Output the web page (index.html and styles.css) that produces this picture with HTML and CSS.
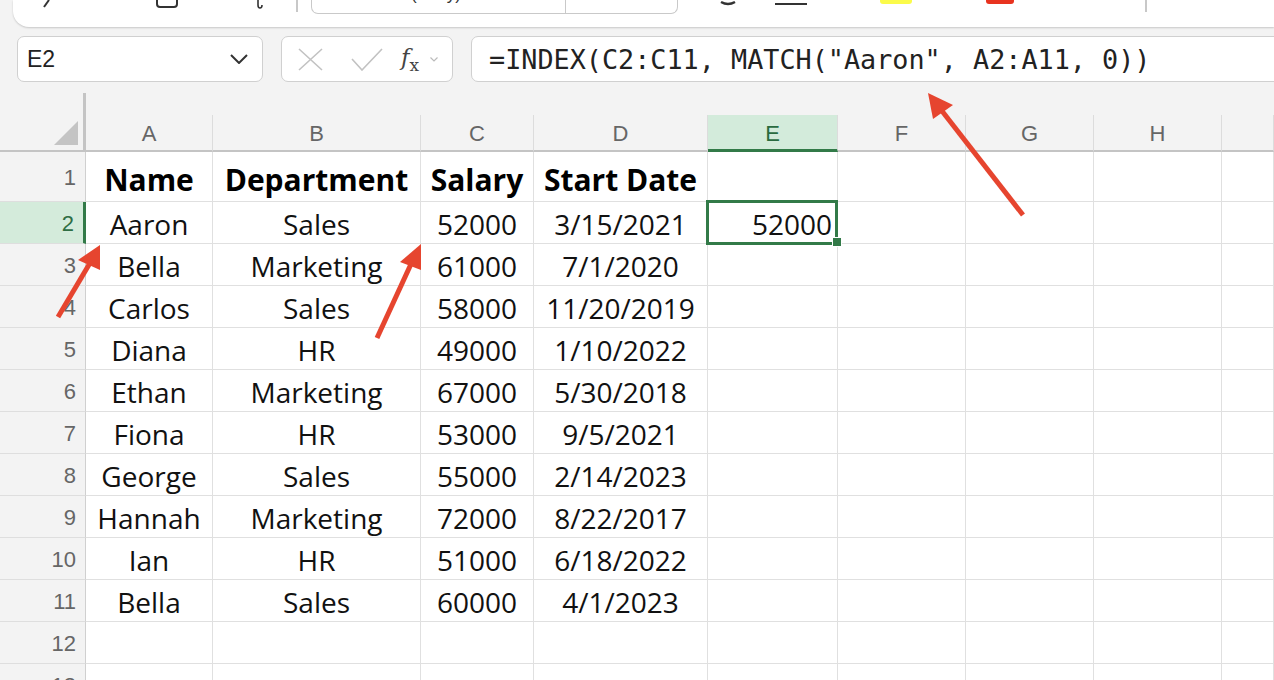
FILE: index.html
```html
<!DOCTYPE html>
<html lang="en">
<head>
    <meta charset="UTF-8">
    <meta name="viewport" content="width=device-width, initial-scale=1.0">
    <title>Employees - INDEX / MATCH</title>
    <link rel="stylesheet" href="styles.css">
</head>
<body>
    <div class="ribbon">
        <svg class="rb-undo" width="10" height="8" viewBox="0 0 10 8"><path d="M2 7 L7 0" stroke="#333" stroke-width="2" fill="none"/></svg>
        <svg class="rb-paste" width="22" height="8" viewBox="0 0 22 8"><path d="M1 0 V4 Q1 7 4 7 H18 Q21 7 21 4 V0" stroke="#333" stroke-width="2" fill="none"/></svg>
        <svg class="rb-brush" width="10" height="10" viewBox="0 0 10 10"><path d="M4 0 V5 Q4 8 6 8 Q8 8 8 5" stroke="#333" stroke-width="1.6" fill="none"/></svg>
        <span class="rb-sep"></span>
        <div class="font-box">
            <span class="font-name">Calibri (Body)</span>
            <span class="font-size"></span>
        </div>
        <svg class="rb-bold" width="18" height="8" viewBox="0 0 18 8"><path d="M2 2 Q9 6 16 2" stroke="#333" stroke-width="2.4" fill="none"/></svg>
        <span class="rb-underline"></span>
        <span class="rb-fill"></span>
        <span class="rb-color"></span>
        <span class="rb-sep rb-sep-right"></span>
    </div>

    <div class="formula-bar">
        <div class="name-box">
            <span>E2</span>
            <svg width="18" height="10" viewBox="0 0 18 10"><polyline points="1,1 9,9 17,1" fill="none" stroke="#333" stroke-width="2"/></svg>
        </div>
        <div class="fx-box">
            <svg width="25" height="23" viewBox="0 0 25 23"><path d="M1 1 L24 22 M24 1 L1 22" stroke="#c2c2c2" stroke-width="1.6" fill="none"/></svg>
            <svg width="32" height="23" viewBox="0 0 32 23"><polyline points="1,11 11,22 31,1" fill="none" stroke="#c2c2c2" stroke-width="1.6"/></svg>
            <span class="fx"><i>f</i><sub>x</sub></span>
            <svg width="8" height="5" viewBox="0 0 8 5"><polyline points="0.5,0.5 4,4 7.5,0.5" fill="none" stroke="#bbb" stroke-width="1.2"/></svg>
        </div>
        <div class="formula-input">=INDEX(C2:C11, MATCH("Aaron", A2:A11, 0))</div>
    </div>

    <div class="sheet">
        <div class="corner"><div class="corner-box"><span class="corner-tri"></span></div></div>
        <div class="col-head"><span>A</span></div>
        <div class="col-head"><span>B</span></div>
        <div class="col-head"><span>C</span></div>
        <div class="col-head"><span>D</span></div>
        <div class="col-head active"><span>E</span></div>
        <div class="col-head"><span>F</span></div>
        <div class="col-head"><span>G</span></div>
        <div class="col-head"><span>H</span></div>
        <div class="col-head"><span></span></div>

        <div class="row-head">1</div>
        <div class="cell bold">Name</div>
        <div class="cell bold">Department</div>
        <div class="cell bold">Salary</div>
        <div class="cell bold">Start Date</div>
        <div class="cell"></div><div class="cell"></div><div class="cell"></div><div class="cell"></div><div class="cell"></div>

        <div class="row-head active">2</div>
        <div class="cell">Aaron</div>
        <div class="cell">Sales</div>
        <div class="cell">52000</div>
        <div class="cell">3/15/2021</div>
        <div class="cell selected">52000</div>
        <div class="cell"></div><div class="cell"></div><div class="cell"></div><div class="cell"></div>

        <div class="row-head">3</div>
        <div class="cell">Bella</div>
        <div class="cell">Marketing</div>
        <div class="cell">61000</div>
        <div class="cell">7/1/2020</div>
        <div class="cell"></div><div class="cell"></div><div class="cell"></div><div class="cell"></div><div class="cell"></div>

        <div class="row-head">4</div>
        <div class="cell">Carlos</div>
        <div class="cell">Sales</div>
        <div class="cell">58000</div>
        <div class="cell">11/20/2019</div>
        <div class="cell"></div><div class="cell"></div><div class="cell"></div><div class="cell"></div><div class="cell"></div>

        <div class="row-head">5</div>
        <div class="cell">Diana</div>
        <div class="cell">HR</div>
        <div class="cell">49000</div>
        <div class="cell">1/10/2022</div>
        <div class="cell"></div><div class="cell"></div><div class="cell"></div><div class="cell"></div><div class="cell"></div>

        <div class="row-head">6</div>
        <div class="cell">Ethan</div>
        <div class="cell">Marketing</div>
        <div class="cell">67000</div>
        <div class="cell">5/30/2018</div>
        <div class="cell"></div><div class="cell"></div><div class="cell"></div><div class="cell"></div><div class="cell"></div>

        <div class="row-head">7</div>
        <div class="cell">Fiona</div>
        <div class="cell">HR</div>
        <div class="cell">53000</div>
        <div class="cell">9/5/2021</div>
        <div class="cell"></div><div class="cell"></div><div class="cell"></div><div class="cell"></div><div class="cell"></div>

        <div class="row-head">8</div>
        <div class="cell">George</div>
        <div class="cell">Sales</div>
        <div class="cell">55000</div>
        <div class="cell">2/14/2023</div>
        <div class="cell"></div><div class="cell"></div><div class="cell"></div><div class="cell"></div><div class="cell"></div>

        <div class="row-head">9</div>
        <div class="cell">Hannah</div>
        <div class="cell">Marketing</div>
        <div class="cell">72000</div>
        <div class="cell">8/22/2017</div>
        <div class="cell"></div><div class="cell"></div><div class="cell"></div><div class="cell"></div><div class="cell"></div>

        <div class="row-head">10</div>
        <div class="cell">Ian</div>
        <div class="cell">HR</div>
        <div class="cell">51000</div>
        <div class="cell">6/18/2022</div>
        <div class="cell"></div><div class="cell"></div><div class="cell"></div><div class="cell"></div><div class="cell"></div>

        <div class="row-head">11</div>
        <div class="cell">Bella</div>
        <div class="cell">Sales</div>
        <div class="cell">60000</div>
        <div class="cell">4/1/2023</div>
        <div class="cell"></div><div class="cell"></div><div class="cell"></div><div class="cell"></div><div class="cell"></div>

        <div class="row-head">12</div>
        <div class="cell"></div><div class="cell"></div><div class="cell"></div><div class="cell"></div>
        <div class="cell"></div><div class="cell"></div><div class="cell"></div><div class="cell"></div><div class="cell"></div>

        <div class="row-head">13</div>
        <div class="cell"></div><div class="cell"></div><div class="cell"></div><div class="cell"></div>
        <div class="cell"></div><div class="cell"></div><div class="cell"></div><div class="cell"></div><div class="cell"></div>
    </div>

    <!-- annotation arrows drawn over the sheet -->
    <svg class="arrows" width="1274" height="680" viewBox="0 0 1274 680">
        <g stroke="#e6452f" stroke-width="5" fill="none">
            <line x1="58" y1="317" x2="90" y2="263"/>
            <line x1="377" y1="338" x2="411" y2="264"/>
            <line x1="1023" y1="215" x2="942" y2="111"/>
        </g>
        <g fill="#e6452f">
            <polygon points="100,245 78,260 100,270"/>
            <polygon points="421,244 400,262 421,270"/>
            <polygon points="928,93 953,105 933,119"/>
        </g>
    </svg>
</body>
</html>
```

FILE: styles.css
```css
body {
    margin: 0;
    height: 680px;
    overflow: hidden;
    position: relative;
    background: #f3f3f3;
    font-family: "Liberation Sans", Arial, sans-serif;
}

/* ribbon strip, only its bottom edge is in view */
.ribbon {
    display: flex;
    align-items: flex-start;
    height: 27px;
    margin-left: 13px;
    background: #fff;
    border-bottom-left-radius: 16px;
    box-shadow: 0 1px 2px rgba(0, 0, 0, 0.18);
    overflow: hidden;
}
.rb-undo {
    margin-left: 29px;
}
.rb-paste {
    margin-left: 104px;
}
.rb-brush {
    margin-left: 76px;
}
.rb-sep {
    width: 2px;
    height: 12px;
    margin-left: 32px;
    background: #c8c8c8;
}
.font-box {
    display: flex;
    width: 367px;
    height: 14px;
    margin-left: 13px;
    border: 1px solid #c9c9c9;
    border-top: none;
    border-radius: 0 0 7px 7px;
    box-sizing: border-box;
}
.font-name {
    width: 254px;
    border-right: 1px solid #c9c9c9;
    font-size: 17px;
    line-height: 1;
    margin-top: -14px;
    padding-left: 46px;
    color: #333;
    box-sizing: border-box;
    overflow: hidden;
    white-space: nowrap;
}
.rb-bold {
    margin-left: 41px;
}
.rb-underline {
    width: 32px;
    height: 2px;
    margin-top: 3px;
    margin-left: 38px;
    background: #333;
}
.rb-fill {
    width: 32px;
    height: 4px;
    margin-left: 73px;
    background: #fbfb4a;
    border-radius: 0 0 3px 3px;
}
.rb-color {
    width: 28px;
    height: 4px;
    margin-left: 74px;
    background: #e8331f;
    border-radius: 0 0 3px 3px;
}
.rb-sep-right {
    margin-left: 131px;
}

/* name box + formula input */
.formula-bar {
    display: flex;
    gap: 18px;
    padding: 9px 0 0 17px;
    height: 46px;
}
.name-box,
.fx-box,
.formula-input {
    flex-shrink: 0;
    box-sizing: border-box;
    height: 46px;
    background: #fff;
    border: 1.5px solid #d0d0d0;
    border-radius: 7px;
    display: flex;
    align-items: center;
}
.name-box {
    width: 246px;
    justify-content: space-between;
    padding: 0 14px 0 9px;
    font-size: 23px;
    color: #222;
}
.fx-box {
    width: 172px;
    padding: 0 9px 0 16px;
}
.fx-box svg:nth-child(2) {
    margin-left: 28px;
}
.fx {
    margin-left: 18px;
    font-family: "DejaVu Serif", "Liberation Serif", serif;
    font-size: 23px;
    color: #444;
}
.fx sub {
    font-style: normal;
    font-size: 17px;
}
.fx-box svg:last-child {
    margin-left: 11px;
}
.formula-input {
    width: 840px;
    padding-left: 17px;
    font-family: "DejaVu Sans Mono", "Liberation Mono", monospace;
    font-size: 26.8px;
    color: #222;
}

/* grid */
.sheet {
    display: grid;
    grid-template-columns: 86px 127px 208px 113px 174px 130px 128px 128px 128px 1fr;
    grid-template-rows: 68px 50px repeat(12, 42px);
    margin-top: 2px;
}
.corner {
    display: flex;
    align-items: flex-end;
}
.corner-box {
    width: 100%;
    height: 59px;
    box-sizing: border-box;
    border-right: 3px solid #c4c4c4;
    border-bottom: 2px solid #c4c4c4;
    display: flex;
    justify-content: flex-end;
    align-items: flex-end;
    padding: 0 5px 5px 0;
}
.corner-tri {
    width: 24px;
    height: 24px;
    background: #c4c4c4;
    clip-path: polygon(100% 0, 100% 100%, 0 100%);
}
.col-head {
    display: flex;
    align-items: flex-end;
}
.col-head span {
    width: 100%;
    height: 37px;
    box-sizing: border-box;
    border-right: 1px solid #dcdcdc;
    border-bottom: 2px solid #c4c4c4;
    display: flex;
    align-items: center;
    justify-content: center;
    padding-top: 3px;
    font-size: 22px;
    color: #666;
}
.col-head.active span {
    background: #d3ebdb;
    color: #2a6b40;
    border-bottom: 3px solid #327a48;
}
.row-head {
    box-sizing: border-box;
    border-right: 1px solid #d0d0d0;
    border-bottom: 1px solid #dedede;
    display: flex;
    align-items: center;
    justify-content: flex-end;
    padding: 3px 9px 0 0;
    font-size: 22px;
    color: #666;
}
.row-head.active {
    background: #d4ebdb;
    color: #2f6e44;
    border-right: 3px solid #327a48;
}
.cell {
    box-sizing: border-box;
    background: #fff;
    border-right: 1px solid #e0e0e0;
    border-bottom: 1px solid #e0e0e0;
    display: flex;
    align-items: center;
    justify-content: center;
    padding-top: 3px;
    font-family: "Open Sans", Lato, sans-serif;
    font-size: 28px;
    color: #111;
    white-space: nowrap;
}
.cell.bold {
    font-weight: 700;
    font-size: 30px;
    padding-top: 5px;
    color: #000;
}
.cell.selected {
    position: relative;
    justify-content: flex-end;
    padding-right: 5px;
}
.cell.selected::after {
    content: '';
    position: absolute;
    left: -2px;
    top: -2px;
    right: -1px;
    bottom: -2px;
    border: 3px solid #327a48;
}
.cell.selected::before {
    content: '';
    position: absolute;
    right: -5px;
    bottom: -4px;
    width: 8px;
    height: 8px;
    background: #327a48;
    border: 1px solid #fff;
    z-index: 1;
}

.arrows {
    position: absolute;
    top: 0;
    left: 0;
    pointer-events: none;
}
```
